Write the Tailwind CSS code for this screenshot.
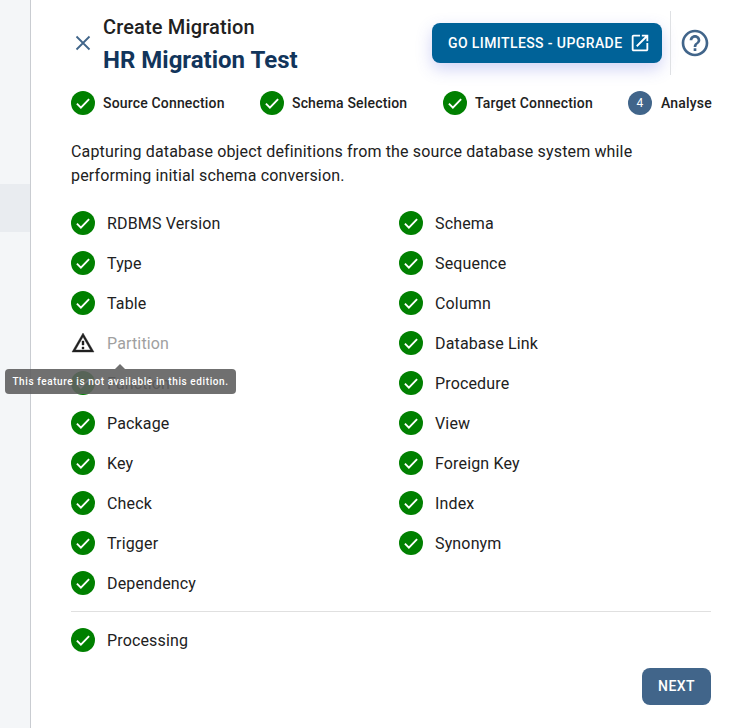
<!DOCTYPE html>
<html lang="en">
<head>
  <meta charset="UTF-8"/>
  <title>Create Migration</title>
  <script src="https://cdn.jsdelivr.net/npm/@tailwindcss/browser@4"></script>
</head>
<body class="font-['Roboto',sans-serif] text-[#212121] bg-white overflow-hidden">
<svg class="hidden">
  <symbol id="ok" viewBox="0 0 24 24">
    <circle cx="12" cy="12" r="12" fill="#008000"/>
    <path d="M5.900 12.600l4 4 8.200-8.400" fill="none" stroke="#fff" stroke-width="1.900"/>
  </symbol>
</svg>

<div class="flex h-[728px] w-[733px]">
  <!-- side menu -->
  <div class="w-[31px] shrink-0 bg-[#f4f6f8] border-r border-[#c9ccd1] pt-[184px]">
    <div class="h-[48px] bg-[#e9ecf0]"></div>
  </div>

  <div class="w-[680px] pl-[40px] pr-0 relative">
    <!-- header -->
    <div class="flex items-center h-[86px] pt-[11px] pb-[11px]">
      <svg class="w-[24px] h-[24px] mr-[8px] shrink-0" viewBox="0 0 24 24"><path d="M5.500 5.500l13 13M18.500 5.500l-13 13" fill="none" stroke="#41658a" stroke-width="1.800"/></svg>
      <div class="w-[329px] mt-[3px]">
        <div class="text-[20px] leading-[30px] font-medium tracking-[0.15px]">Create Migration</div>
        <div class="text-[24px] leading-[36px] font-bold text-[#12355b]">HR Migration Test</div>
      </div>
      <button class="flex items-center w-[230px] h-[40px] pl-[16px] rounded-[8px] bg-[#006298] text-white text-[14px] font-medium tracking-[0.4px] shadow-[0_6px_16px_rgba(70,80,220,0.25)]">
        GO LIMITLESS - UPGRADE
        <svg class="w-[22px] h-[22px] ml-[7px]" viewBox="0 0 24 24" fill="#fff"><path d="M19 19H5V5h7V3H5c-1.110 0-2 .9-2 2v14c0 1.100.89 2 2 2h14c1.100 0 2-.9 2-2v-7h-2v7zM14 3v2h3.590l-9.830 9.830 1.410 1.410L19 6.410V10h2V3h-7z"/></svg>
      </button>
      <div class="w-px h-[64px] bg-[#dfe1e4] ml-[8px] mr-[8px]"></div>
      <svg class="w-[32px] h-[32px]" viewBox="0 0 24 24" fill="#41658a"><path d="M11 18h2v-2h-2v2zm1-16C6.480 2 2 6.480 2 12s4.480 10 10 10 10-4.480 10-10S17.520 2 12 2zm0 18c-4.410 0-8-3.590-8-8s3.590-8 8-8 8 3.590 8 8-3.590 8-8 8zm0-14c-2.210 0-4 1.790-4 4h2c0-1.100.9-2 2-2s2 .9 2 2c0 2-3 1.750-3 5h2c0-2.250 3-2.500 3-5 0-2.210-1.790-4-4-4z"/></svg>
    </div>

    <!-- stepper -->
    <div class="flex items-center h-[24px] mt-[5px] text-[14px] font-medium tracking-[0.17px] whitespace-nowrap">
      <svg class="w-[24px] h-[24px] mr-[8px] shrink-0"><use href="#ok"/></svg><span class="w-[157px] shrink-0">Source Connection</span>
      <svg class="w-[24px] h-[24px] mr-[8px] shrink-0"><use href="#ok"/></svg><span class="w-[151px] shrink-0">Schema Selection</span>
      <svg class="w-[24px] h-[24px] mr-[8px] shrink-0"><use href="#ok"/></svg><span class="w-[153px] shrink-0">Target Connection</span>
      <span class="w-[24px] h-[24px] mr-[9px] shrink-0 rounded-full bg-[#41658a] text-white text-[12px] font-normal flex items-center justify-center">4</span><span>Analyse</span>
    </div>

    <p class="mt-[25px] text-[16px] leading-[24px] tracking-[0.15px] w-[600px]">Capturing database object definitions from the source database system while performing initial schema conversion.</p>

    <!-- objects -->
    <div class="grid grid-cols-[328px_1fr] mt-[15px] text-[16px] tracking-[0.15px]">
      <div>
        <div class="flex items-center h-[40px]"><svg class="w-[24px] h-[24px] mr-[12px]"><use href="#ok"/></svg><span class="pt-[2px]">RDBMS Version</span></div>
        <div class="flex items-center h-[40px]"><svg class="w-[24px] h-[24px] mr-[12px]"><use href="#ok"/></svg><span class="pt-[2px]">Type</span></div>
        <div class="flex items-center h-[40px]"><svg class="w-[24px] h-[24px] mr-[12px]"><use href="#ok"/></svg><span class="pt-[2px]">Table</span></div>
        <div class="flex items-center h-[40px] text-[#a0a0a0]">
          <svg class="w-[24px] h-[24px] mr-[12px]" viewBox="0 0 24 24" fill="#212121" stroke="#212121" stroke-width="0.4"><path d="M12 5.990 19.530 19H4.470L12 5.990M12 2 1 21h22L12 2zm1 14h-2v2h2v-2zm0-6h-2v4h2v-4z"/></svg><span class="pt-[2px]">Partition</span>
        </div>
        <div class="flex items-center h-[40px]"><svg class="w-[24px] h-[24px] mr-[12px]"><use href="#ok"/></svg><span class="pt-[2px]">Function</span></div>
        <div class="flex items-center h-[40px]"><svg class="w-[24px] h-[24px] mr-[12px]"><use href="#ok"/></svg><span class="pt-[2px]">Package</span></div>
        <div class="flex items-center h-[40px]"><svg class="w-[24px] h-[24px] mr-[12px]"><use href="#ok"/></svg><span class="pt-[2px]">Key</span></div>
        <div class="flex items-center h-[40px]"><svg class="w-[24px] h-[24px] mr-[12px]"><use href="#ok"/></svg><span class="pt-[2px]">Check</span></div>
        <div class="flex items-center h-[40px]"><svg class="w-[24px] h-[24px] mr-[12px]"><use href="#ok"/></svg><span class="pt-[2px]">Trigger</span></div>
        <div class="flex items-center h-[40px]"><svg class="w-[24px] h-[24px] mr-[12px]"><use href="#ok"/></svg><span class="pt-[2px]">Dependency</span></div>
      </div>
      <div>
        <div class="flex items-center h-[40px]"><svg class="w-[24px] h-[24px] mr-[12px]"><use href="#ok"/></svg><span class="pt-[2px]">Schema</span></div>
        <div class="flex items-center h-[40px]"><svg class="w-[24px] h-[24px] mr-[12px]"><use href="#ok"/></svg><span class="pt-[2px]">Sequence</span></div>
        <div class="flex items-center h-[40px]"><svg class="w-[24px] h-[24px] mr-[12px]"><use href="#ok"/></svg><span class="pt-[2px]">Column</span></div>
        <div class="flex items-center h-[40px]"><svg class="w-[24px] h-[24px] mr-[12px]"><use href="#ok"/></svg><span class="pt-[2px]">Database Link</span></div>
        <div class="flex items-center h-[40px]"><svg class="w-[24px] h-[24px] mr-[12px]"><use href="#ok"/></svg><span class="pt-[2px]">Procedure</span></div>
        <div class="flex items-center h-[40px]"><svg class="w-[24px] h-[24px] mr-[12px]"><use href="#ok"/></svg><span class="pt-[2px]">View</span></div>
        <div class="flex items-center h-[40px]"><svg class="w-[24px] h-[24px] mr-[12px]"><use href="#ok"/></svg><span class="pt-[2px]">Foreign Key</span></div>
        <div class="flex items-center h-[40px]"><svg class="w-[24px] h-[24px] mr-[12px]"><use href="#ok"/></svg><span class="pt-[2px]">Index</span></div>
        <div class="flex items-center h-[40px]"><svg class="w-[24px] h-[24px] mr-[12px]"><use href="#ok"/></svg><span class="pt-[2px]">Synonym</span></div>
      </div>
    </div>

    <div class="h-px bg-[#e0e0e0] mt-[8px] w-[640px]"></div>
    <div class="flex items-center h-[40px] mt-[8px] text-[16px] tracking-[0.15px]"><svg class="w-[24px] h-[24px] mr-[12px]"><use href="#ok"/></svg><span class="pt-[2px]">Processing</span></div>

    <div class="flex justify-end w-[640px] mt-[8px]">
      <button class="w-[69px] h-[37px] rounded-[8px] bg-[#41658a] text-white text-[14px] font-medium tracking-[0.4px]">NEXT</button>
    </div>
  </div>
</div>

<!-- tooltip on Partition -->
<div class="absolute left-[5px] top-[369px] w-[231px] h-[25px] rounded-[4px] bg-[#616161]/90 text-white text-[10px] font-medium tracking-[0.6px] leading-[25px] text-center whitespace-nowrap">
  <span class="absolute left-[110px] -top-[5px] w-0 h-0 border-x-[5px] border-x-transparent border-b-[5px] border-b-[#616161]/90"></span>
  This feature is not available in this edition.
</div>
</body>
</html>
